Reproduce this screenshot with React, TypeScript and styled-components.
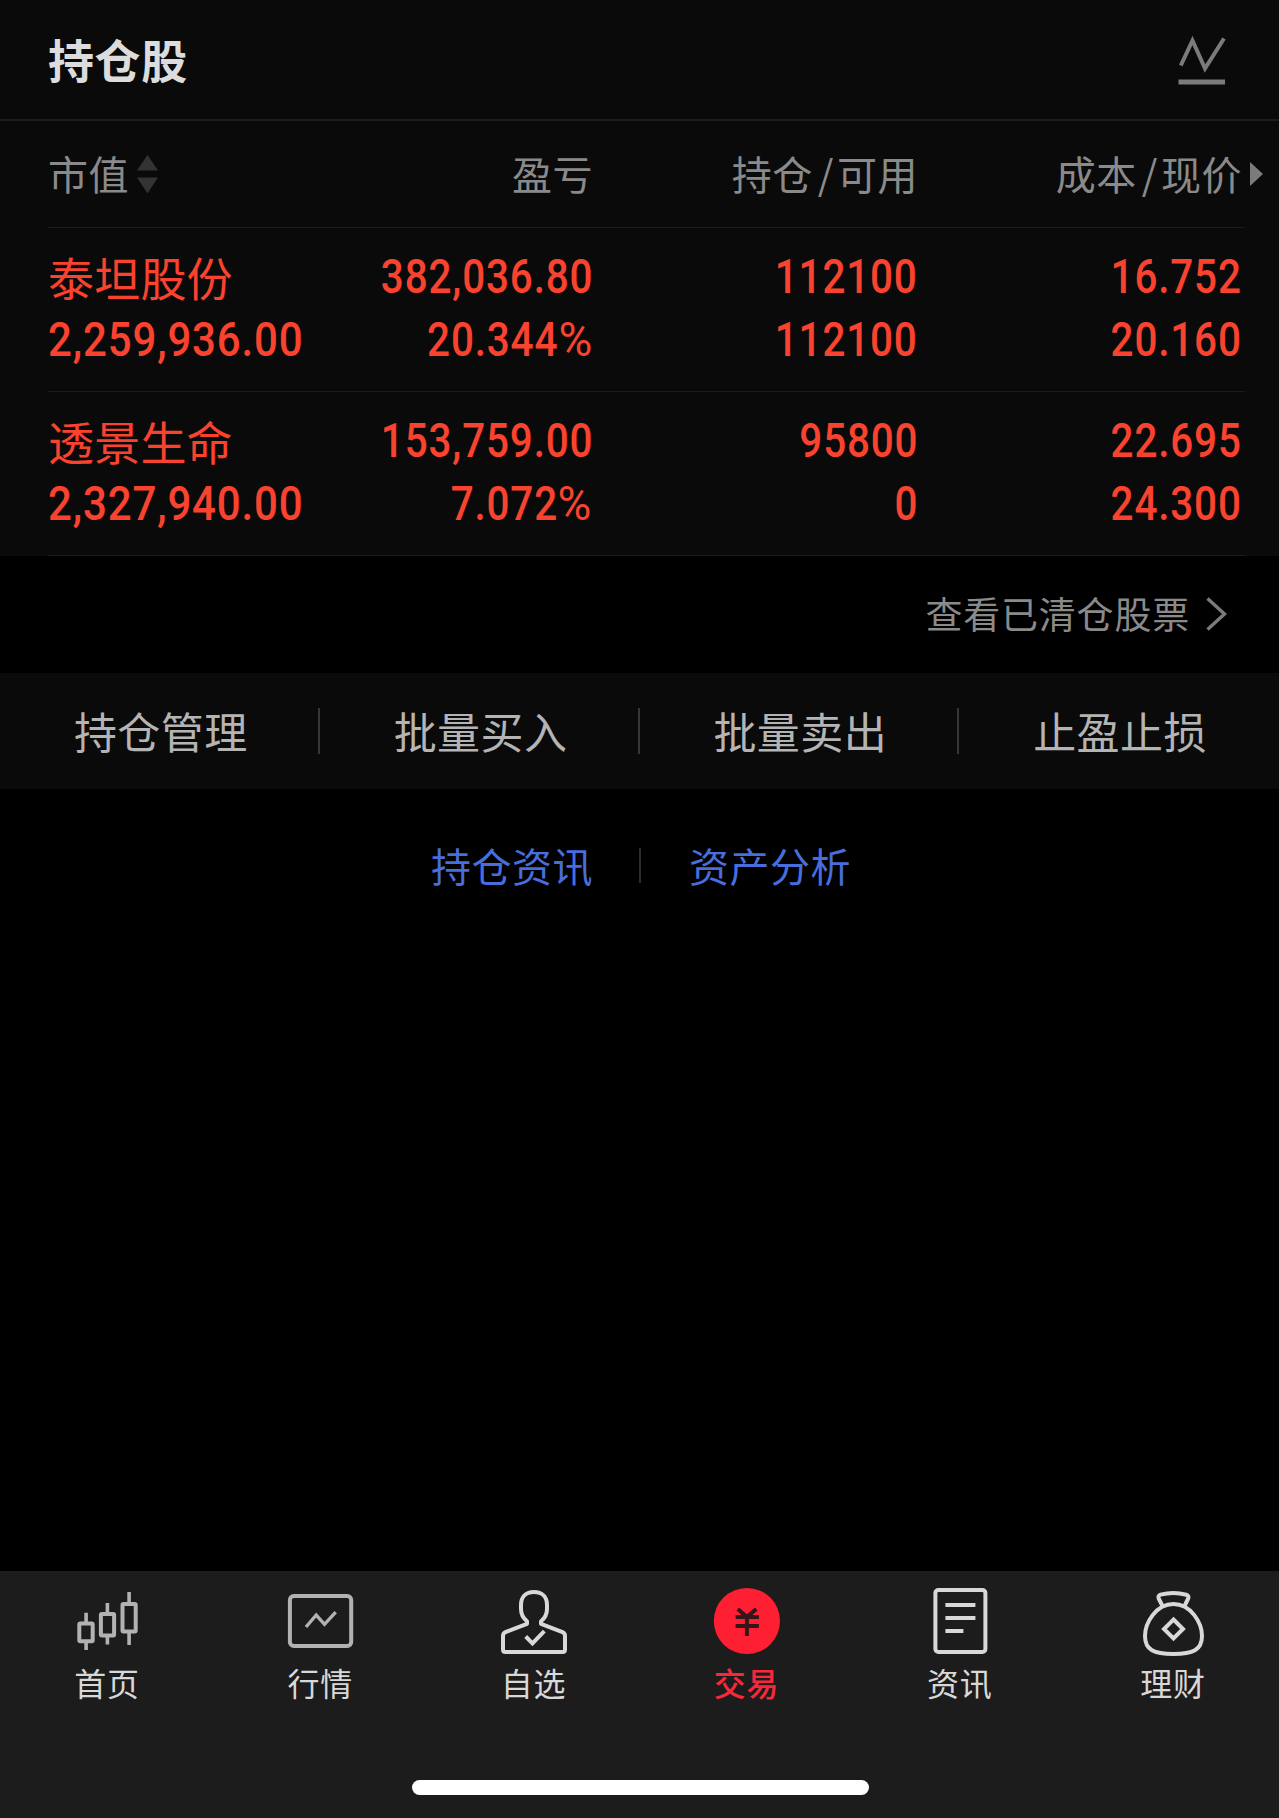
import React from "react";
import styled, { createGlobalStyle } from "styled-components";

const GlobalStyle = createGlobalStyle`
  * { box-sizing: border-box; }
  body {
    margin: 0;
    background: #000;
    font-family: "Noto Sans CJK SC", sans-serif;
  }
`;

const Page = styled.div`
  display: flex;
  flex-direction: column;
  width: 100%;
  height: 1818px;
  overflow: hidden;
  background: #000;
`;

const Header = styled.header`
  display: flex;
  align-items: center;
  justify-content: space-between;
  height: 121px;
  padding: 0 53px 3px 48px;
  background: #0a0a0a;
  border-bottom: 2px solid #1d1d1d;
`;

const Title = styled.h1`
  margin: 0;
  font-size: 46px;
  font-weight: 700;
  line-height: 60px;
  letter-spacing: 0.6px;
  color: #dcdcdc;
`;

const Table = styled.section`
  height: 435px;
  padding: 0 34px 0 48px;
  background: #0a0a0a;
`;

const Row = styled.div<{ $height: number }>`
  display: grid;
  grid-template-columns: 250px 295px 325px 324px;
  align-items: center;
  height: ${(p) => p.$height}px;
  border-bottom: 1px solid #1b1b1b;
`;

const HeadCell = styled.div<{ $right?: boolean }>`
  display: flex;
  align-items: center;
  justify-content: ${(p) => (p.$right ? "flex-end" : "flex-start")};
  font-size: 40px;
  line-height: 56px;
  letter-spacing: 0.5px;
  color: #8a8a8a;
  padding-bottom: 3px;
  white-space: nowrap;
`;

const Slash = styled.span`
  margin: 0 3px 0 5px;
`;

const SortArrows = styled.svg`
  margin: 4px 0 0 8px;
`;

const MoreArrow = styled.svg`
  margin: 3px -21px 0 8px;
`;

const Cell = styled.div<{ $right?: boolean }>`
  display: flex;
  flex-direction: column;
  align-items: ${(p) => (p.$right ? "flex-end" : "flex-start")};
  padding-bottom: 4px;
  color: #f9432f;
`;

const StockName = styled.div`
  height: 63px;
  font-size: 46px;
  line-height: 62px;
  letter-spacing: 0.2px;
  white-space: nowrap;
`;

const Figure = styled.div<{ $left?: boolean }>`
  height: 63px;
  font-family: Roboto, sans-serif;
  font-size: ${(p) => (p.$left ? 49 : 48)}px;
  font-weight: 500;
  line-height: 64px;
  letter-spacing: 1px;
  white-space: nowrap;
  transform: scaleX(${(p) => (p.$left ? 0.857 : 0.842)});
  transform-origin: ${(p) => (p.$left ? "left" : "right")} center;
`;

const Percent = styled.span`
  display: inline-block;
  margin-left: 5px;
  font-weight: 400;
  transform: scaleX(1.14);
  transform-origin: right center;
`;

const ClearedLink = styled.a`
  display: flex;
  align-items: center;
  justify-content: flex-end;
  height: 117px;
  padding: 0 52px 3px 0;
  font-size: 37px;
  line-height: 54px;
  letter-spacing: 0.8px;
  color: #8a8a8a;
`;

const Chevron = styled.svg`
  margin: 2px 0 0 16px;
`;

const Actions = styled.nav`
  display: flex;
  height: 116px;
  background: #0a0a0a;
`;

const Action = styled.a`
  display: flex;
  flex: 1;
  align-items: center;
  justify-content: center;
  font-size: 43px;
  letter-spacing: 0.5px;
  line-height: 60px;
  padding: 0 0 2px 2px;
  color: #b4b4b4;
`;

const Divider = styled.i<{ $height: number; $color: string }>`
  flex: none;
  align-self: center;
  width: 2px;
  height: ${(p) => p.$height}px;
  margin: 0 0 0 -2px;
  background: ${(p) => p.$color};
`;

const Links = styled.div`
  display: flex;
  justify-content: center;
  gap: 48px;
  margin-top: 47px;
  padding-left: 3px;
  height: 58px;
`;

const BlueLink = styled.a`
  font-size: 40px;
  line-height: 58px;
  letter-spacing: 0.5px;
  color: #486ddd;
`;

const TabBar = styled.footer`
  display: flex;
  flex-direction: column;
  align-items: center;
  height: 247px;
  margin-top: auto;
  padding-top: 15px;
  background: #1c1c1c;
`;

const Tabs = styled.nav`
  display: flex;
  width: 100%;
`;

const Tab = styled.a<{ $active?: boolean }>`
  display: flex;
  flex: 1;
  flex-direction: column;
  align-items: center;
  gap: 4px;
  font-size: 32px;
  font-weight: ${(p) => (p.$active ? 500 : 400)};
  line-height: 40px;
  letter-spacing: 0.8px;
  color: ${(p) => (p.$active ? "#f8283b" : "#d8d8d8")};
`;

const TabLabel = styled.span`
  padding-left: 1px;
`;

const HomeIndicator = styled.div`
  width: 457px;
  height: 15px;
  margin: 78px 0 0 2px;
  border-radius: 8px;
  background: #fff;
`;

const TrendSvg = styled.svg`
  margin-top: 3px;
`;

const TrendIcon = () => (
  <TrendSvg width="48" height="50" viewBox="0 0 48 50" fill="none" stroke="#7b7b7b">
    <path d="M2.8 30.5 14.5 5.5 27 33.5 46 3.5" strokeWidth="4" />
    <path d="M0.5 47H47" strokeWidth="5" />
  </TrendSvg>
);

const IconBox = ({ color, children }: { color: string; children: React.ReactNode }) => (
  <svg width="72" height="72" viewBox="0 0 72 72" fill="none" stroke={color} strokeWidth="4">
    {children}
  </svg>
);

const HomeIcon = () => (
  <IconBox color="#b2b2b2">
    <path
      strokeWidth="3.6"
      d="M15.1 26.7V37M15.1 56v8M36.4 17v10.5M36.4 50v8.5M58.1 6v11M58.1 46v13"
    />
    <rect x="8.3" y="37.6" width="13.4" height="17.6" rx="1" />
    <rect x="29.9" y="28" width="13.2" height="21.5" rx="1" />
    <rect x="51.5" y="18" width="13.2" height="27.5" rx="1" />
  </IconBox>
);

const MarketIcon = () => (
  <IconBox color="#b2b2b2">
    <rect x="5.9" y="10" width="61.3" height="50" rx="4" />
    <path d="M22 41 32.2 29 40.5 38.3 51.7 26.2" strokeWidth="3.4" />
  </IconBox>
);

const WatchIcon = () => (
  <IconBox color="#d8d8d8">
    <path
      strokeLinejoin="round"
      d="M30 35.2C26.2 32.200 24 28 24 23V19C24 11 29 6 37 6S50 11 50 19V23C50 28 47.800 32.200 44 35.200V37.800L65.500 46.200Q68 47.300 68 50V63.500Q68 66 65.500 66H8.500Q6 66 6 63.500V50Q6 47.300 8.500 46.200L30 37.800Z"
    />
    <path d="M28.700 50.500 35.500 57.300 47.300 45.200" />
  </IconBox>
);

const TradeIcon = () => (
  <IconBox color="#33151a">
    <circle cx="36.9" cy="35" r="33.1" fill="#ff1f33" stroke="none" />
    <path d="M27.8 23 36.9 31 46.3 23M25.6 31H48.9M25.6 40H48.9M36.9 31V50" />
  </IconBox>
);

const NewsIcon = () => (
  <IconBox color="#d8d8d8">
    <rect x="12.4" y="4" width="50" height="62" rx="3" />
    <path d="M22.4 19H52.4M22.4 32H52.4M22.4 45H40.4" />
  </IconBox>
);

const WealthIcon = () => (
  <IconBox color="#d8d8d8">
    <path d="M37.4 18C20 18 9 37 9 50C9 64 18 68 37.4 68S66 64 66 50C66 37 55 18 37.4 18Z" />
    <path
      d="M26.5 20 22.7 12.5Q21.7 9.5 24.5 8.7Q37.4 5.3 50.3 8.7Q53.2 9.5 52.2 12.5L48.500 20"
      strokeLinejoin="round"
    />
    <path d="M37.5 33.500 47 43 37.500 52.500 28 43Z" />
  </IconBox>
);

const holdings = [
  {
    name: "泰坦股份",
    value: "2,259,936.00",
    profit: "382,036.80",
    rate: "20.344",
    cells: [
      ["112100", "112100"],
      ["16.752", "20.160"],
    ],
  },
  {
    name: "透景生命",
    value: "2,327,940.00",
    profit: "153,759.00",
    rate: "7.072",
    cells: [
      ["95800", "0"],
      ["22.695", "24.300"],
    ],
  },
];

const actions = ["持仓管理", "批量买入", "批量卖出", "止盈止损"];

const tabs = [
  { label: "首页", Icon: HomeIcon },
  { label: "行情", Icon: MarketIcon },
  { label: "自选", Icon: WatchIcon },
  { label: "交易", Icon: TradeIcon, active: true },
  { label: "资讯", Icon: NewsIcon },
  { label: "理财", Icon: WealthIcon },
];

export default function App() {
  return (
    <>
      <GlobalStyle />
      <Page>
        <Header>
          <Title>持仓股</Title>
          <TrendIcon />
        </Header>

        <Table>
          <Row $height={107}>
            <HeadCell>
              市值
              <SortArrows width="21" height="39" viewBox="0 0 21 39" fill="#333">
                <path d="M10.5 0 21 15.5H0ZM0 22.5H21L10.5 38.5Z" />
              </SortArrows>
            </HeadCell>
            <HeadCell $right>盈亏</HeadCell>
            <HeadCell $right>
              持仓<Slash>/</Slash>可用
            </HeadCell>
            <HeadCell $right>
              成本<Slash>/</Slash>现价
              <MoreArrow width="13" height="24" viewBox="0 0 13 24" fill="#7b7b7b">
                <path d="M0 0 13 12 0 24Z" />
              </MoreArrow>
            </HeadCell>
          </Row>
          {holdings.map((h) => (
            <Row key={h.name} $height={164}>
              <Cell>
                <StockName>{h.name}</StockName>
                <Figure $left>{h.value}</Figure>
              </Cell>
              <Cell $right>
                <Figure>{h.profit}</Figure>
                <Figure>
                  {h.rate}
                  <Percent>%</Percent>
                </Figure>
              </Cell>
              {h.cells.map(([top, bottom], i) => (
                <Cell key={i} $right>
                  <Figure>{top}</Figure>
                  <Figure>{bottom}</Figure>
                </Cell>
              ))}
            </Row>
          ))}
        </Table>

        <ClearedLink>
          查看已清仓股票
          <Chevron width="21" height="34" viewBox="0 0 21 34" fill="none" stroke="#7b7b7b" strokeWidth="3.4">
            <path d="M1.5 1.5 18.5 17 1.5 32.5" />
          </Chevron>
        </ClearedLink>

        <Actions>
          {actions.map((a, i) => (
            <React.Fragment key={a}>
              {i > 0 && <Divider $height={46} $color="#363636" />}
              <Action>{a}</Action>
            </React.Fragment>
          ))}
        </Actions>

        <Links>
          <BlueLink>持仓资讯</BlueLink>
          <Divider $height={35} $color="#2c2c2c" />
          <BlueLink>资产分析</BlueLink>
        </Links>

        <TabBar>
          <Tabs>
            {tabs.map(({ label, Icon, active }) => (
              <Tab key={label} $active={active}>
                <Icon />
                <TabLabel>{label}</TabLabel>
              </Tab>
            ))}
          </Tabs>
          <HomeIndicator />
        </TabBar>
      </Page>
    </>
  );
}
